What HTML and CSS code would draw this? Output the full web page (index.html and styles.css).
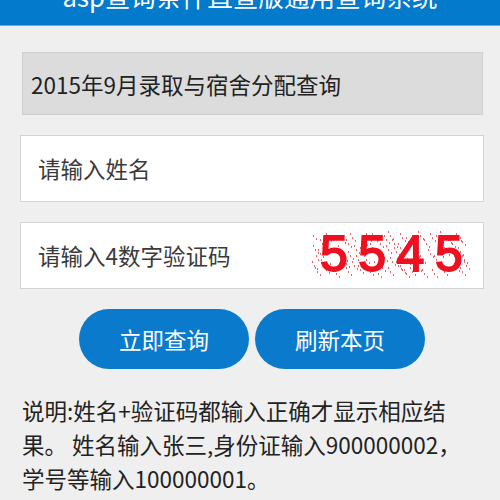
FILE: index.html
```html
<!DOCTYPE html>
<html lang="zh-CN">
<head>
<meta charset="UTF-8">
<meta name="viewport" content="width=device-width, initial-scale=1.0">
<title>asp查询条件直查版通用查询系统</title>
<link rel="stylesheet" href="styles.css">
</head>
<body>
<div class="header"><h1>asp查询条件直查版通用查询系统</h1></div>

<form class="form">
  <div class="select-box">2015年9月录取与宿舍分配查询</div>
  <div class="field">请输入姓名</div>
  <div class="field field-code">
    <span>请输入4数字验证码</span>
    <svg class="captcha" width="166" height="56" viewBox="0 0 166 56">
      <path id="dots" class="noise" d="M1 9h1M3 23h1M6 33h1M2 39h1M8 27h1M11 37h1M5 45h1M14 43h1M20 41h1M10 17h1M30 13h1M36 17h1M40 11h1M44 23h1M38 29h1M34 37h1M42 39h1M36 45h1M46 33h1M48 43h1M52 15h1M56 11h1M62 11h1M50 25h1M54 33h1M58 45h1M66 47h1M70 41h1M74 13h1M78 9h1M82 17h1M76 23h1M84 25h1M72 31h1M80 35h1M86 39h1M78 45h1M90 11h1M88 21h1M92 29h1M96 15h1M90 43h1M98 37h1M102 13h1M108 9h1M114 17h1M118 27h1M104 27h1M110 33h1M100 45h1M120 11h1M122 47h1M126 13h1M130 9h1M136 13h1M140 17h1M146 11h1M150 15h1M148 25h1M152 33h1M128 27h1M134 25h1M142 29h1M144 41h1M132 45h1M150 45h1M154 39h1M16 11h1M24 47h1M28 23h1M32 31h1M60 21h1M64 39h1M68 17h1M94 47h1M106 41h1M112 47h1M124 33h1"/>
      <use href="#dots" x="3" y="3"/>
      <use href="#dots" x="-2" y="-4"/>
      <text class="captcha-text" x="8" y="44">5545</text>
    </svg>
  </div>
  <div class="buttons">
    <button type="button" class="btn">立即查询</button>
    <button type="button" class="btn">刷新本页</button>
  </div>
</form>

<p class="note">说明:姓名+验证码都输入正确才显示相应结<br>果。 姓名输入张三,身份证输入900000002，<br>学号等输入100000001。</p>
</body>
</html>
```

FILE: styles.css
```css
* {
  box-sizing: border-box;
}
html, body {
  height: 500px;
  overflow: hidden;
}
body {
  margin: 0;
  background-color: #efefef;
  color: #222;
  font-family: "Noto Sans CJK SC", "Noto Sans", sans-serif;
}
.header {
  height: 26px;
  overflow: hidden;
  background-color: #037acc;
  border-bottom: 1px solid #5cb1ea;
}
.header h1 {
  margin: -23px 0 0;
  color: #fff;
  font-size: 25.6px;
  font-weight: 400;
  line-height: 38px;
  text-align: center;
}
.form {
  padding: 26px 16px 0 20px;
}
.select-box {
  display: flex;
  align-items: center;
  height: 63px;
  margin: 0 1px 20px 2px;
  padding-left: 8px;
  background-color: #dcdcdc;
  border: 1px solid #cfcfcf;
  font-size: 22.5px;
}
.field {
  display: flex;
  align-items: center;
  justify-content: space-between;
  height: 67px;
  margin-bottom: 20px;
  padding-left: 17px;
  padding-bottom: 1px;
  background-color: #fff;
  border: 1px solid #d4d4d4;
  color: #3a3a3a;
  font-size: 22.5px;
}
.captcha {
  margin-right: 5px;
  filter: blur(0.4px);
}
.noise {
  stroke: #f2606a;
  stroke-width: 2;
  fill: none;
}
.captcha-text {
  fill: #ee1020;
  stroke: #ee1020;
  stroke-width: 1.8;
  font-family: "Liberation Sans", sans-serif;
  font-size: 50px;
  letter-spacing: 10.5px;
}
.buttons {
  display: flex;
  justify-content: center;
  gap: 6px;
}
.btn {
  width: 170px;
  height: 60px;
  padding: 0;
  background-color: #0a7bcc;
  border: none;
  border-radius: 30px;
  color: #fff;
  font-family: inherit;
  font-size: 22.5px;
}
.note {
  margin: 24px 16px 0 22px;
  color: #222;
  font-size: 22.5px;
  line-height: 34px;
}
```
